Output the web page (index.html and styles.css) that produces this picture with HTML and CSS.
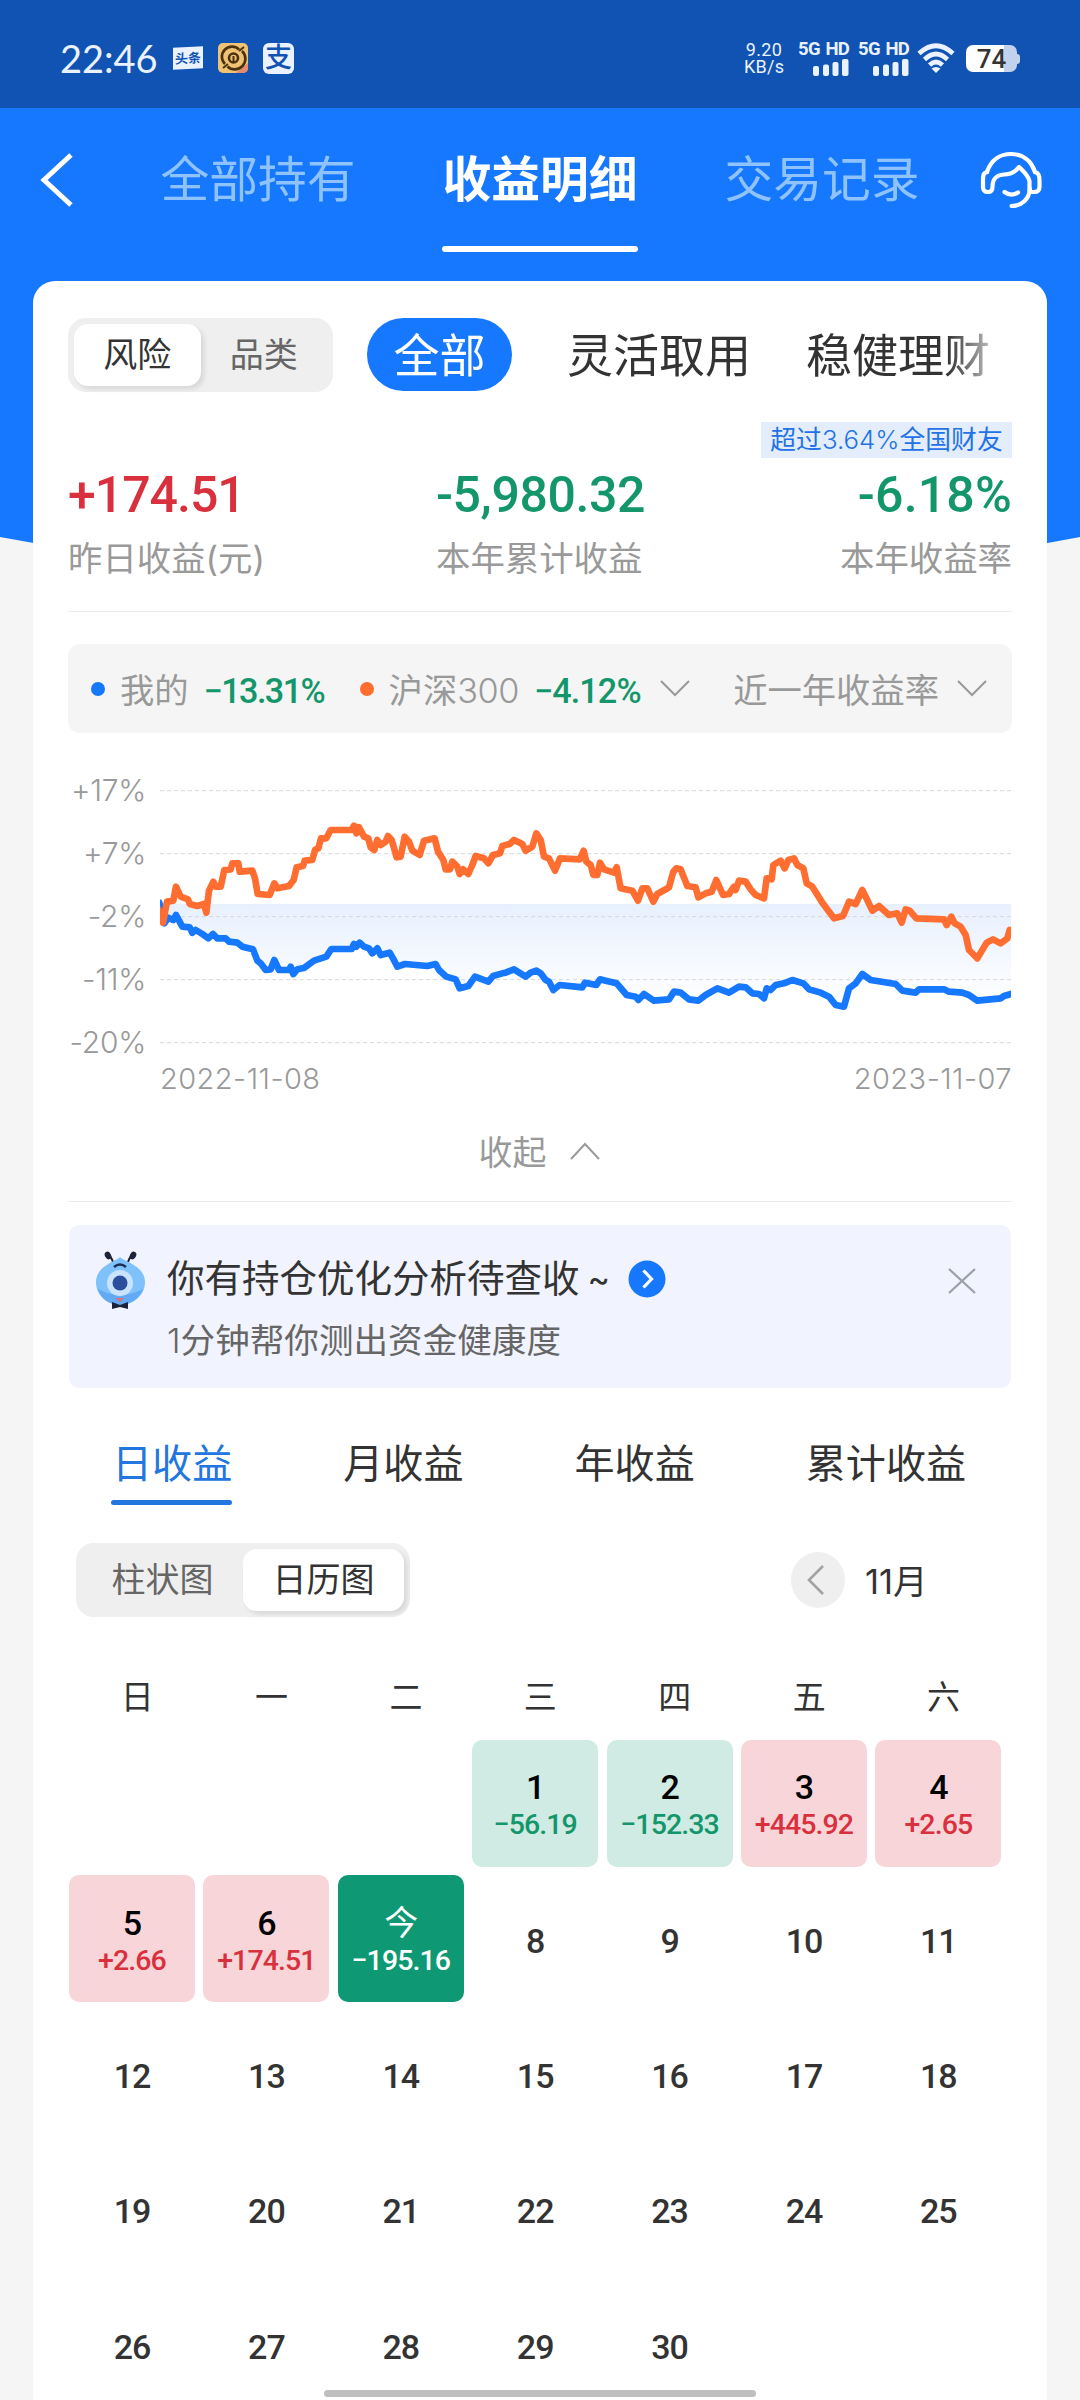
FILE: index.html
```
<!DOCTYPE html>
<html lang="zh-CN">

<head>
    <meta charset="UTF-8">
    <meta name="viewport" content="width=device-width, initial-scale=1.0">
    <title>收益明细</title>
    <link rel="stylesheet" href="styles.css">
</head>

<body>
    <svg class="bg" width="1080" height="600" viewBox="0 0 1080 600">
        <path d="M0 0H1080V537Q540 640 0 537Z" fill="#1677ff" />
    </svg>
    <div class="status">
        <div class="time">22:46</div>
        <div class="toutiao">头条</div>
        <svg class="app" width="30" height="30" viewBox="0 0 30 30">
            <rect width="30" height="30" rx="5" fill="#efc373" />
            <path d="M30 20V25a5 5 0 0 1-5 5H18Z" fill="#e58a6c" />
            <g fill="none" stroke="#4a3210" stroke-width="2.6">
                <path d="M7 21A10 10 0 0 1 21 6.500M24 8A10 10 0 0 1 9.500 23.500" />
                <circle cx="15.500" cy="15" r="4.500" />
                <path d="M15.500 13v7M5 25l5-4M26 4l-5 4" stroke-width="2" />
            </g>
        </svg>
        <div class="alipay">支</div>
        <div class="speed"><span>9.20</span><span>KB/s</span></div>
        <div class="signal">
            <span>5G HD</span>
            <svg width="36" height="17" viewBox="0 0 36 17" fill="#eaf2ff">
                <rect x="0" y="7" width="6" height="10" rx="2" />
                <rect x="10" y="5.500" width="6" height="11.500" rx="2" />
                <rect x="19.500" y="3" width="6" height="14" rx="2" />
                <rect x="29" y="0" width="6.500" height="17" rx="2" />
            </svg>
        </div>
        <div class="signal">
            <span>5G HD</span>
            <svg width="36" height="17" viewBox="0 0 36 17" fill="#eaf2ff">
                <rect x="0" y="7" width="6" height="10" rx="2" />
                <rect x="10" y="5.500" width="6" height="11.500" rx="2" />
                <rect x="19.500" y="3" width="6" height="14" rx="2" />
                <rect x="29" y="0" width="6.500" height="17" rx="2" />
            </svg>
        </div>
        <svg class="wifi" width="38" height="30" viewBox="0 0 38 30" fill="none" stroke="#eaf2ff" stroke-width="4.600">
            <path d="M2 10.500Q19-5 36 10.500" />
            <path d="M7.500 16.500Q19 5.500 30.500 16.500" />
            <path d="M12.500 22Q19 16 25.500 22" />
            <path d="M19 30l-4.500-4.500q4.500-3 9 0Z" fill="#eaf2ff" stroke="none" />
        </svg>
        <div class="battery"><span>74</span></div>
    </div>

    <div class="nav">
        <svg class="back" width="34" height="56" viewBox="0 0 34 56" fill="none" stroke="#fff" stroke-width="5">
            <path d="M32 3L5 28l27 25" />
        </svg>
        <div class="nav-tab">全部持有</div>
        <div class="nav-tab on">收益明细</div>
        <div class="nav-tab">交易记录</div>
        <svg class="kefu" width="62" height="58" viewBox="0 0 62 58" fill="none" stroke="#fff" stroke-width="4.200" stroke-linecap="round" stroke-linejoin="round">
            <path d="M7 21C11 9 20 3 31 3S51 9 55 21" />
            <path d="M7 21C3 22 3 25 3 30V36Q3 41 8 41Q12.500 41 12.500 36C12.500 27 17 24 24 23.500C32 23.500 36 20 39 16C43 20 48 24 49.500 30V40" />
            <path d="M55 21C59 22 59.500 25 59.500 30V36Q59.500 41 54 41H50" />
            <path d="M50 38C49 48 42 55 31.500 55" />
            <path d="M24.500 41Q31 46 38 41.500" />
        </svg>
    </div>

    <div class="card">
        <div class="filter">
            <div class="seg seg-risk">
                <div class="seg-item on">风险</div>
                <div class="seg-item">品类</div>
            </div>
            <div class="kinds">
                <div class="kind on">全部</div>
                <div class="kind">灵活取用</div>
                <div class="kind">稳健理财</div>
            </div>
        </div>

        <div class="beat"><span>超过<em>3.64%</em>全国财友</span></div>
        <div class="sums">
            <div class="sum">
                <div class="num red">+174.51</div>
                <div class="label">昨日收益(元)</div>
            </div>
            <div class="sum">
                <div class="num green">-5,980.32</div>
                <div class="label">本年累计收益</div>
            </div>
            <div class="sum">
                <div class="num green">-6.18%</div>
                <div class="label">本年收益率</div>
            </div>
        </div>

        <div class="legend">
            <i class="dot blue"></i>
            <span class="name">我的</span>
            <span class="rate mine">−13.31%</span>
            <i class="dot orange"></i>
            <span class="name">沪深<em>300</em></span>
            <span class="rate hs">−4.12%</span>
            <svg class="arrow" width="30" height="18" viewBox="0 0 30 18" fill="none" stroke="#999" stroke-width="2"><path d="M1 1l14 14L29 1" /></svg>
            <span class="name period">近一年收益率</span>
            <svg class="arrow" width="30" height="18" viewBox="0 0 30 18" fill="none" stroke="#999" stroke-width="2"><path d="M1 1l14 14L29 1" /></svg>
        </div>

        <div class="chart">
            <div class="axis">
                <span>+17%</span>
                <span>+7%</span>
                <span>-2%</span>
                <span>-11%</span>
                <span>-20%</span>
            </div>
            <div class="plot">
                <!-- 3 units = 1px -->
                <svg width="851" height="270" viewBox="363 480 2553 810">
                    <defs>
                        <linearGradient id="area" gradientUnits="userSpaceOnUse" x1="0" y1="852" x2="0" y2="1150">
                            <stop offset="0" stop-color="#e7f0fe" />
                            <stop offset="1" stop-color="#ffffff" />
                        </linearGradient>
                    </defs>
                    <path fill="url(#area)" d="M361 852L376 910 411 885 430 920 508 955 560 955 642 988 680 1050 750 1050 795 1044 877 987 962 968 1052 998 1075 1040 1190 1032 1250 1078 1262 1105 1308 1070 1425 1048 1492 1052 1543 1110 1683 1078 1733 1090 1798 1140 1890 1138 1978 1142 2035 1105 2175 1135 2260 1080 2370 1130 2415 1160 2470 1062 2570 1092 2715 1108 2815 1142 2916 1122V852Z" />
                    <g stroke="#d5d8dc" stroke-width="3" stroke-dasharray="12 9">
                        <path d="M363 512H2916M363 701H2916M363 890H2916M363 1079H2916M363 1268H2916" />
                    </g>
                    <g fill="none" stroke-width="20" stroke-linejoin="round" stroke-linecap="round">
                        <polyline stroke="#1677ff" points="361,848 376,910 388,893 403,900 411,885 430,920 452,922 460,938 470,930 490,942 508,955 522,942 535,955 560,955 570,965 595,968 610,980 642,988 655,1022 665,1030 680,1050 695,1048 706,1020 720,1050 750,1050 755,1040 763,1062 775,1048 795,1044 825,1022 862,1010 877,987 938,987 945,972 952,980 962,968 975,980 990,985 1000,1000 1015,985 1025,1005 1052,998 1062,1015 1075,1040 1098,1032 1165,1038 1190,1032 1200,1050 1222,1070 1250,1078 1262,1105 1288,1098 1308,1070 1348,1085 1362,1068 1390,1060 1400,1058 1425,1048 1460,1070 1475,1058 1492,1052 1505,1060 1520,1080 1530,1085 1543,1110 1562,1095 1630,1102 1638,1088 1672,1095 1683,1078 1700,1082 1733,1090 1763,1125 1790,1130 1798,1140 1815,1122 1845,1142 1890,1138 1905,1115 1925,1118 1950,1138 1978,1142 2000,1125 2035,1105 2070,1118 2100,1100 2120,1102 2140,1120 2160,1122 2175,1135 2183,1105 2195,1110 2210,1095 2235,1090 2260,1080 2293,1090 2310,1108 2345,1118 2370,1130 2390,1155 2415,1160 2430,1105 2450,1090 2470,1062 2495,1080 2570,1092 2590,1112 2630,1118 2640,1108 2715,1108 2730,1115 2770,1118 2790,1125 2815,1142 2885,1135 2895,1128 2916,1122" />
                        <polyline stroke="#ff6e30" points="358,868 372,908 384,845 403,842 411,800 425,830 447,838 452,852 475,858 495,852 502,878 510,812 523,785 530,800 545,800 556,750 575,748 580,730 598,730 602,755 640,752 648,775 656,822 692,825 706,790 715,805 750,798 764,780 773,742 792,738 797,722 820,720 828,690 838,685 846,655 862,655 875,630 938,630 945,617 952,640 960,622 975,650 988,655 995,682 1006,690 1015,660 1025,675 1040,665 1047,648 1058,660 1073,712 1085,710 1097,650 1110,665 1120,692 1142,705 1155,662 1187,655 1197,695 1213,720 1220,748 1233,748 1240,725 1255,740 1262,762 1272,748 1288,762 1300,735 1310,708 1335,715 1348,730 1362,705 1383,700 1390,678 1412,672 1425,660 1450,672 1460,692 1480,680 1492,640 1505,660 1515,710 1530,715 1548,752 1563,715 1622,718 1634,692 1642,725 1655,735 1663,765 1675,765 1683,728 1695,748 1725,758 1733,742 1745,805 1780,812 1797,842 1810,805 1825,805 1843,845 1855,822 1890,802 1903,755 1912,745 1925,748 1945,798 1970,802 1978,832 2000,820 2018,815 2032,780 2052,825 2070,822 2085,800 2090,810 2100,782 2120,785 2135,808 2150,825 2175,835 2183,775 2198,778 2203,735 2225,722 2237,745 2248,720 2265,715 2275,735 2293,745 2303,790 2320,800 2350,848 2385,895 2412,888 2430,845 2450,852 2470,810 2480,830 2500,872 2520,858 2550,885 2575,880 2588,908 2600,868 2612,872 2632,895 2715,898 2723,915 2737,890 2747,910 2765,920 2780,945 2790,990 2815,1015 2843,968 2862,958 2885,970 2905,955 2912,930" />
                    </g>
                </svg>
                <div class="dates"><span>2022-11-08</span><span>2023-11-07</span></div>
            </div>
        </div>

        <div class="fold">
            <span>收起</span>
            <svg width="30" height="18" viewBox="0 0 30 18" fill="none" stroke="#999" stroke-width="2"><path d="M1 17L15 2l14 15" /></svg>
        </div>

        <div class="tip">
            <svg class="ant" width="50" height="58" viewBox="0 0 50 58">
                <path d="M18 11Q16 5 12 3M33 11Q35 5 39 3" stroke="#1c2238" stroke-width="2" fill="none" />
                <ellipse cx="13" cy="4.500" rx="3" ry="4" fill="#1c2238" transform="rotate(-30 13 4.500)" />
                <ellipse cx="38" cy="4.500" rx="3" ry="4" fill="#1c2238" transform="rotate(30 38 4.500)" />
                <path d="M25 6C30 11 50 15 50 31C50 46 36 54 25 54S1 46 1 31C1 15 20 11 25 6Z" fill="#7ec1fb" />
                <path d="M3 38Q25 50 48 38Q42 53 25 54Q8 53 3 38Z" fill="#62aaf3" />
                <path d="M19 16Q25 11 31 16" stroke="#1c2f55" stroke-width="2.500" fill="none" />
                <circle cx="25" cy="32" r="13" fill="#c9e3fd" />
                <circle cx="25" cy="32" r="7.500" fill="#2a4f9e" />
                <path d="M20 47h9l-4 4Z" fill="#d9707c" />
                <path d="M17 51l8 3 8-3v7l-8-2-8 2Z" fill="#1c2238" />
            </svg>
            <div class="tip-text">
                <div class="tip-title">
                    <span>你有持仓优化分析待查收</span><b>~</b>
                    <svg width="38" height="38" viewBox="0 0 38 38"><circle cx="19" cy="19" r="18.500" fill="#1677ff" /><path d="M15.500 10.500l8 8.500-8 8.500" fill="none" stroke="#fff" stroke-width="3.200" /></svg>
                </div>
                <div class="tip-desc"><em>1</em>分钟帮你测出资金健康度</div>
            </div>
            <svg class="close" width="28" height="26" viewBox="0 0 28 26" stroke="#9a9fab" stroke-width="2.200"><path d="M1 1l26 24M27 1L1 25" /></svg>
        </div>

        <div class="tabs">
            <div class="tab on">日收益</div>
            <div class="tab">月收益</div>
            <div class="tab">年收益</div>
            <div class="tab">累计收益</div>
        </div>

        <div class="tools">
            <div class="seg seg-view">
                <div class="seg-item">柱状图</div>
                <div class="seg-item on">日历图</div>
            </div>
            <div class="prev">
                <svg width="18" height="30" viewBox="0 0 18 30" fill="none" stroke="#a3a3a3" stroke-width="2.600"><path d="M16 1L2 15l14 14" /></svg>
            </div>
            <div class="month"><em>11</em>月</div>
        </div>

        <div class="week">
            <span>日</span><span>一</span><span>二</span><span>三</span><span>四</span><span>五</span><span>六</span>
        </div>
        <div class="days">
            <div class="day"></div>
            <div class="day"></div>
            <div class="day"></div>
            <div class="day down"><b>1</b><span>−56.19</span></div>
            <div class="day down"><b>2</b><span>−152.33</span></div>
            <div class="day up"><b>3</b><span>+445.92</span></div>
            <div class="day up"><b>4</b><span>+2.65</span></div>
            <div class="day up"><b>5</b><span>+2.66</span></div>
            <div class="day up"><b>6</b><span>+174.51</span></div>
            <div class="day today"><b>今</b><span>−195.16</span></div>
            <div class="day">8</div>
            <div class="day">9</div>
            <div class="day">10</div>
            <div class="day">11</div>
            <div class="day">12</div>
            <div class="day">13</div>
            <div class="day">14</div>
            <div class="day">15</div>
            <div class="day">16</div>
            <div class="day">17</div>
            <div class="day">18</div>
            <div class="day">19</div>
            <div class="day">20</div>
            <div class="day">21</div>
            <div class="day">22</div>
            <div class="day">23</div>
            <div class="day">24</div>
            <div class="day">25</div>
            <div class="day">26</div>
            <div class="day">27</div>
            <div class="day">28</div>
            <div class="day">29</div>
            <div class="day">30</div>
        </div>
    </div>
    <div class="home"></div>
</body>

</html>
```
FILE: styles.css
```
* {
    box-sizing: border-box;
    margin: 0;
    padding: 0;
}

body {
    position: relative;
    width: 1080px;
    height: 2400px;
    overflow: hidden;
    background-color: #f5f5f5;
    color: #333;
    font-family: Inter, "Noto Sans CJK SC", sans-serif;
    font-weight: 400;
}

svg {
    display: block;
    flex-shrink: 0;
}

em,
i {
    font-style: normal;
}

em {
    font-weight: 300;
}

.bg {
    position: absolute;
    top: 0;
    left: 0;
    z-index: -1;
}

/* 状态栏 */
.status {
    display: flex;
    align-items: center;
    height: 108px;
    padding: 8px 63px 0 60px;
    background-color: #1153b3;
    color: #eaf2ff;
    white-space: nowrap;
}

.time {
    width: 113px;
    font-family: Lato, sans-serif;
    font-size: 38px;
}

.toutiao {
    width: 30px;
    height: 22px;
    background-color: #eaf2ff;
    color: #1153b3;
    font-size: 13px;
    font-weight: 700;
    line-height: 22px;
    text-align: center;
    transform: skewY(-3deg);
}

.app {
    margin: 0 15px;
}

.alipay {
    width: 31px;
    height: 31px;
    border-radius: 6px;
    background-color: #eaf2ff;
    color: #1153b3;
    font-size: 27px;
    font-weight: 500;
    line-height: 29px;
    text-align: center;
}

.speed {
    display: flex;
    flex-direction: column;
    width: 40px;
    margin-left: auto;
    font-family: Roboto, sans-serif;
    font-size: 18px;
    line-height: 17px;
    letter-spacing: 0.3px;
    text-align: center;
}

.signal {
    display: flex;
    flex-direction: column;
    align-items: flex-end;
    width: 49px;
    margin-left: 11px;
    font-family: Roboto, sans-serif;
    font-size: 18.5px;
    font-weight: 700;
    line-height: 16px;
    letter-spacing: -0.8px;
    word-spacing: 2px;
}

.speed + .signal {
    margin-left: 16px;
}

.signal svg {
    margin-top: 2px;
}

.wifi {
    margin-left: 8px;
}

.battery {
    position: relative;
    width: 51px;
    height: 27px;
    margin-left: 11px;
    border-radius: 7px;
    background: linear-gradient(90deg, #fff 38px, #c3d2ec 38px);
    color: #333;
    font-family: Roboto, sans-serif;
    font-size: 26px;
    font-weight: 500;
    line-height: 28px;
    text-align: center;
}

.battery::after {
    content: "";
    position: absolute;
    top: 9px;
    right: -3px;
    width: 3px;
    height: 10px;
    border-radius: 0 3px 3px 0;
    background-color: #c3d2ec;
}

/* 顶部导航 */
.nav {
    display: flex;
    align-items: center;
    height: 173px;
    padding: 0 38px 29px 39px;
}

.nav-tab {
    position: relative;
    width: 196px;
    margin-left: 87px;
    color: #8fc3ff;
    font-size: 48.8px;
    line-height: 60px;
    text-align: center;
    white-space: nowrap;
}

.nav-tab + .nav-tab {
    margin-left: 86px;
}

.nav-tab.on {
    color: #fff;
    font-weight: 700;
}

.nav-tab.on::after {
    content: "";
    position: absolute;
    left: 0;
    bottom: -42px;
    width: 196px;
    height: 6px;
    border-radius: 3px;
    background-color: #fff;
}

.kefu {
    margin-left: auto;
}

.card {
    width: 1014px;
    height: 2130px;
    margin-left: 33px;
    padding: 37px 35px 0;
    border-radius: 22px 22px 0 0;
    background-color: #fff;
}

/* 筛选 */
.filter {
    display: flex;
    height: 74px;
}

.seg {
    display: flex;
    padding: 6px;
    border-radius: 18px;
    background-color: #efefef;
    color: #666;
    font-size: 34px;
    line-height: 61px;
    text-align: center;
}

.seg-item {
    flex: 1;
    height: 62px;
}

.seg-item.on {
    border-radius: 14px;
    background-color: #fff;
    box-shadow: 3px 3px 5px rgba(0, 0, 0, .1);
    color: #333;
}

.seg-risk {
    width: 265px;
}

.kinds {
    display: flex;
    gap: 55px;
    width: 623px;
    margin-left: 34px;
    overflow: hidden;
    font-size: 46px;
    line-height: 75px;
    white-space: nowrap;
    -webkit-mask-image: linear-gradient(90deg, #000 580px, rgba(0, 0, 0, .35) 622px);
}

.kind.on {
    width: 147px;
    height: 73px;
    border-radius: 37px;
    background-color: #1677ff;
    color: #fff;
    text-align: center;
}

/* 收益汇总 */
.beat {
    display: flex;
    justify-content: flex-end;
    margin-top: 30px;
}

.beat span {
    width: 251px;
    height: 36px;
    background-color: #e3edfb;
    color: #2473e6;
    font-size: 25.8px;
    line-height: 36px;
    text-align: center;
    white-space: nowrap;
}

.sums {
    display: flex;
    height: 154px;
    border-bottom: 1px solid #ebebeb;
}

.sum:first-child {
    width: 368px;
}

.sum:last-child {
    margin-left: auto;
    text-align: right;
}

.num {
    height: 75px;
    font-family: Roboto, sans-serif;
    font-size: 50px;
    font-weight: 500;
    line-height: 75px;
    letter-spacing: -0.4px;
}

.sum:last-child .num {
    letter-spacing: 0.2px;
}

.num.red {
    letter-spacing: -1px;
}

.red {
    color: #d9303e;
}

.green {
    color: #14966b;
}

.label {
    color: #999;
    font-size: 34.4px;
    line-height: 52px;
}

/* 图例 */
.legend {
    display: flex;
    align-items: center;
    height: 89px;
    margin-top: 32px;
    padding: 0 25px 0 23px;
    border-radius: 12px;
    background-color: #f5f5f5;
    white-space: nowrap;
}

.dot {
    width: 14px;
    height: 14px;
    border-radius: 50%;
}

.dot.blue {
    background-color: #1677ff;
}

.dot.orange {
    margin-left: 36px;
    background-color: #ff6e30;
}

.name {
    margin-left: 15px;
    padding-bottom: 2px;
    color: #999;
    font-size: 34.3px;
}

.name em {
    letter-spacing: -0.5px;
}

.rate {
    margin-left: 15px;
    padding-top: 4px;
    color: #14966b;
    font-family: Roboto, sans-serif;
    font-size: 34.2px;
    font-weight: 500;
    letter-spacing: -1.6px;
}

.rate.mine {
    width: 120px;
}

.rate.hs {
    width: 109px;
    letter-spacing: -0.9px;
}

.arrow {
    margin-left: 17px;
}

.period {
    margin-left: auto;
}

.period + .arrow {
    margin-left: 18px;
}

/* 走势图 */
.chart {
    display: flex;
    margin-top: 47px;
}

.axis {
    display: flex;
    flex-direction: column;
    width: 93px;
    padding-right: 14px;
    margin-top: -21px;
    color: #999;
    font-size: 30px;
    font-weight: 300;
    letter-spacing: -0.3px;
    line-height: 63px;
    text-align: right;
    white-space: nowrap;
}

.dates {
    display: flex;
    justify-content: space-between;
    width: 852px;
    color: #999;
    font-size: 29px;
    font-weight: 300;
    letter-spacing: 0.45px;
    line-height: 57px;
}

.fold {
    display: flex;
    justify-content: center;
    align-items: center;
    gap: 23px;
    height: 95px;
    padding: 0 2px 7px 0;
    border-bottom: 1px solid #ebebeb;
    color: #999;
    font-size: 34px;
}

/* 提示条 */
.tip {
    display: flex;
    width: 942px;
    height: 163px;
    margin: 23px 0 0 1px;
    padding: 26px 35px 0 26px;
    border-radius: 10px;
    background-color: #f1f4ff;
}

.tip-text {
    margin-left: 22px;
}

.tip-title {
    display: flex;
    align-items: center;
    height: 56px;
    font-size: 37.5px;
    line-height: 50px;
}

.tip-title b {
    margin: 0 18px 0 8px;
    font-size: 34px;
    font-weight: 400;
}

.tip-desc {
    margin-top: 8px;
    color: #666;
    font-size: 34.6px;
    line-height: 50px;
}

.close {
    margin: 17px 0 0 auto;
}

/* 收益页签 */
.tabs {
    display: flex;
    gap: 111px;
    margin-top: 45px;
    padding-left: 44px;
    font-size: 40.1px;
    line-height: 61px;
}

.tab.on {
    position: relative;
    color: #2276e0;
}

.tab.on::after {
    content: "";
    position: absolute;
    left: -1px;
    bottom: -11px;
    width: 121px;
    height: 5px;
    border-radius: 3px;
    background-color: #2276e0;
}

.tools {
    display: flex;
    align-items: center;
    height: 73px;
    margin-top: 49px;
    padding-left: 8px;
}

.seg-view {
    width: 334px;
}

.prev {
    display: flex;
    align-items: center;
    justify-content: center;
    width: 54px;
    height: 56px;
    margin-left: 381px;
    padding-right: 4px;
    border-radius: 50%;
    background-color: #efefef;
}

.month {
    margin-left: 20px;
    padding-bottom: 2px;
    font-size: 34.5px;
}

.month em {
    font-weight: 400;
}

/* 日历 */
.week {
    display: flex;
    margin: 53px 0 0 2px;
}

.week span {
    width: 134.4px;
    font-size: 33px;
    line-height: 56px;
    text-align: center;
}

.days {
    display: grid;
    grid-template-columns: repeat(7, 126px);
    grid-auto-rows: 126.5px;
    gap: 8.9px 8.4px;
    margin: 15px 0 0 1px;
}

.day {
    display: flex;
    flex-direction: column;
    align-items: center;
    justify-content: center;
    padding-top: 4px;
    border-radius: 10px;
    font-family: Roboto, "Noto Sans CJK SC", sans-serif;
    font-size: 34px;
    font-weight: 500;
    letter-spacing: -1px;
}

.day b {
    color: #000;
    font-weight: 500;
    line-height: 39px;
}

.day span {
    font-size: 28.5px;
    line-height: 35px;
    letter-spacing: -0.9px;
}

.day.up {
    background-color: #f8d5d8;
    color: #d9303e;
}

.day.down {
    background-color: #d0ebe3;
    color: #14966b;
}

.day.today {
    background-color: #0e9974;
    color: #fff;
}

.day.today b {
    color: #fff;
    font-weight: 400;
}

.home {
    position: absolute;
    left: 324px;
    bottom: 3px;
    width: 432px;
    height: 7px;
    border-radius: 4px;
    background-color: #bfbfbf;
}
```
